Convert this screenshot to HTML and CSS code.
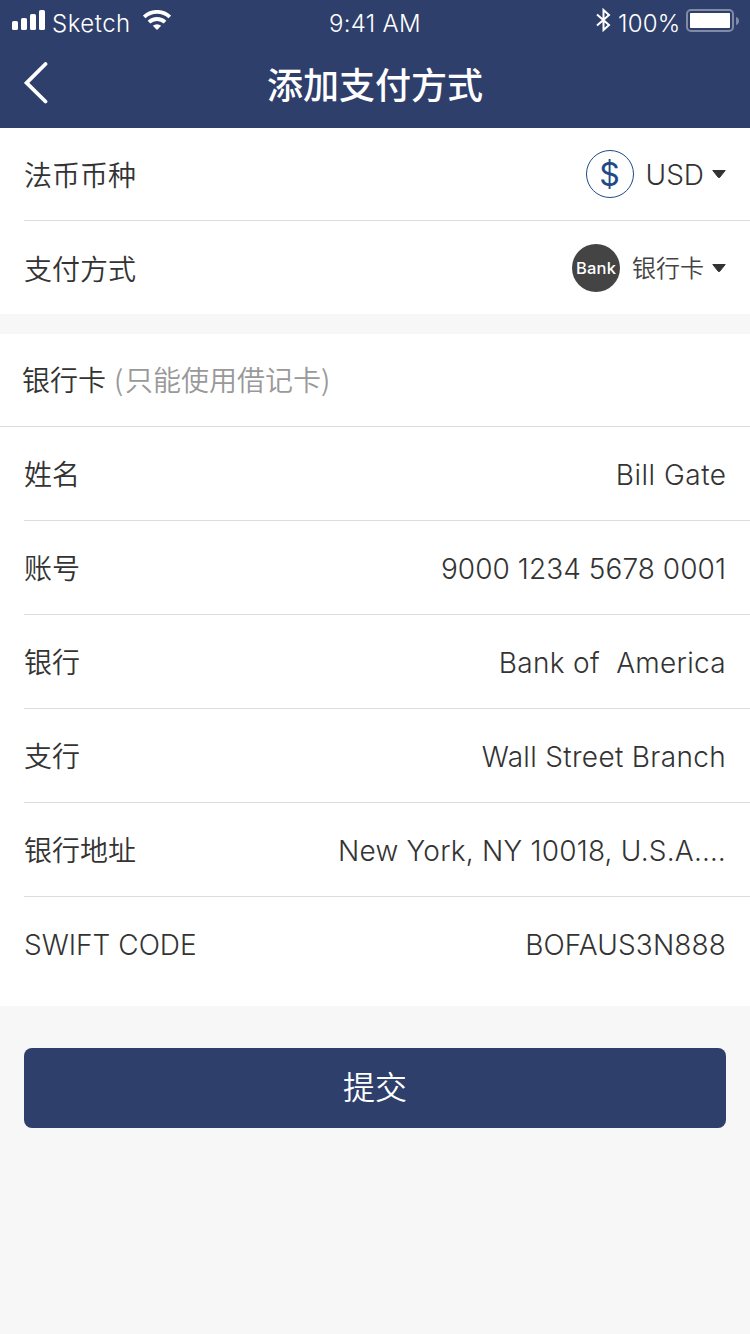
FILE: index.html
```html
<!DOCTYPE html>
<html lang="zh-CN">
<head>
<meta charset="utf-8">
<title>添加支付方式</title>
<link rel="stylesheet" href="styles.css">
</head>
<body>
<header class="header">
  <div class="status">
    <div class="status-left">
      <svg class="signal" width="34" height="20" viewBox="0 0 34 20" fill="#fff"><rect x="0" y="11" width="6" height="9" rx="1.6"/><rect x="9" y="8" width="6" height="12" rx="1.6"/><rect x="18" y="4" width="6" height="16" rx="1.6"/><rect x="27" y="0" width="6" height="20" rx="1.6"/></svg>
      <span class="carrier">Sketch</span>
      <svg class="wifi" width="28" height="20" viewBox="0 0 28 20" fill="none" stroke="#fff" stroke-width="3.8"><path d="M1.200 7a18.500 18.500 0 0 1 25.600 0M6 12.200a11.600 11.600 0 0 1 16 0"/><path d="M14 20l-4.200-4.200a6.200 6.200 0 0 1 8.400 0z" fill="#fff" stroke="none"/></svg>
    </div>
    <span class="clock">9:41 AM</span>
    <div class="status-right">
      <svg class="bluetooth" width="16" height="24" viewBox="0 0 16 24" fill="none" stroke="#fff" stroke-width="2"><path d="M1 6.500l12 10.500-5.500 5V2l5.500 5-12 10.500"/></svg>
      <span class="percent">100%</span>
      <svg class="battery" width="54" height="24" viewBox="0 0 54 24"><rect x="1" y="1" width="46" height="21" rx="4" fill="none" stroke="#fff" stroke-opacity=".4" stroke-width="2"/><rect x="4" y="4" width="40" height="15" rx=".8" fill="#fff"/><path d="M50 8q3 .8 3 4t-3 4z" fill="#fff" fill-opacity=".4"/></svg>
    </div>
  </div>
  <div class="nav">
    <svg class="back" width="24" height="42" viewBox="0 0 24 42" fill="none" stroke="#fff" stroke-width="3.800" stroke-linecap="round"><path d="M21.500 2L2.600 20.800 21.500 39.500"/></svg>
    <h1 class="title">添加支付方式</h1>
  </div>
</header>
<main>
  <section class="group">
    <div class="row"><span class="label">法币币种</span><span class="choice"><span class="coin">$</span><span class="usd">USD</span><svg class="caret" width="14" height="8" viewBox="0 0 14 8"><path d="M.8 .5h12.400L7.600 7.500H6.400z" fill="#333" stroke="#333" stroke-linejoin="round"/></svg></span></div>
    <div class="row"><span class="label">支付方式</span><span class="choice"><span class="bank">Bank</span><span class="method">银行卡</span><svg class="caret" width="14" height="8" viewBox="0 0 14 8"><path d="M.8 .5h12.400L7.600 7.500H6.400z" fill="#333" stroke="#333" stroke-linejoin="round"/></svg></span></div>
  </section>
  <section class="group details">
    <h2 class="heading">银行卡<span class="hint"><span class="paren">(</span>只能使用借记卡<span class="paren">)</span></span></h2>
    <div class="row"><span class="label">姓名</span><span class="value v-name">Bill Gate</span></div>
    <div class="row"><span class="label">账号</span><span class="value v-number">9000 1234 5678 0001</span></div>
    <div class="row"><span class="label">银行</span><span class="value v-bank">Bank of&nbsp; America</span></div>
    <div class="row"><span class="label">支行</span><span class="value v-branch">Wall Street Branch</span></div>
    <div class="row"><span class="label">银行地址</span><span class="value v-address">New York, NY 10018, U.S.A.…</span></div>
    <div class="row"><span class="value v-code">SWIFT CODE</span><span class="value v-swift">BOFAUS3N888</span></div>
  </section>
  <button class="submit">提交</button>
</main>
</body>
</html>
```

FILE: styles.css
```css
* { box-sizing: border-box; }
body { margin: 0; min-height: 1334px; background: #f7f7f7; color: #333; font-family: Inter, "Noto Sans CJK SC", sans-serif; }
svg { display: block; flex: none; }
.header { height: 128px; background: #2f3f6b; color: #fff; }
.status { height: 40px; padding: 0 12px; display: grid; grid-template-columns: 1fr auto 1fr; font-size: 24px; font-weight: 350; line-height: 48px; }
.status-left, .status-right { display: flex; align-items: flex-start; }
.status-right { justify-content: flex-end; }
.signal { margin-top: 10px; }
.carrier { width: 78px; margin-left: 6px; letter-spacing: .5px; line-height: 47px; }
.wifi { margin: 10px 0 0 13px; }
.clock { letter-spacing: .3px; }
.bluetooth { margin: 8px 6px 0 0; }
.percent { width: 62px; letter-spacing: .2px; line-height: 47px; }
.battery { margin: 9px -2px 0 6px; }
.nav { height: 88px; padding: 0 24px; display: grid; grid-template-columns: 24px 1fr 24px; align-items: center; }
.back { margin-top: -2px; }
.title { margin: 0; padding-bottom: 2px; text-align: center; font: 500 36px/86px "Noto Sans CJK SC", sans-serif; }
.group { background: #fff; }
.row { height: 94px; margin-left: 24px; padding-right: 24px; display: flex; align-items: center; justify-content: space-between; border-bottom: 1px solid #ddd; }
.group:first-child .row { height: 93px; }
.row + .row:last-child { border: 0; }
.group:first-child .row:last-child { padding-top: 1px; }
.label { padding-bottom: 1px; font: 350 28px/40px "Noto Sans CJK SC", sans-serif; white-space: nowrap; }
.choice { display: flex; align-items: center; }
.coin, .bank { width: 48px; height: 48px; border-radius: 50%; display: flex; align-items: center; justify-content: center; margin-right: 12px; }
.coin { border: 1px solid #1f4a87; color: #1f4a87; font-size: 32px; font-weight: 400; }
.bank { background: #444; color: #fff; font-size: 16.5px; font-weight: 500; letter-spacing: .2px; }
.usd { padding-top: 1px; font-size: 28px; font-weight: 300; }
.method { padding-bottom: 2px; font: 350 24px/34px "Noto Sans CJK SC", sans-serif; color: #444; }
.caret { margin-left: 8px; }
.details { margin-top: 20px; padding-bottom: 15px; }
.heading { height: 93px; margin: 0; padding-left: 22px; font: 350 28px/90px "Noto Sans CJK SC", sans-serif; border-bottom: 1px solid #ddd; }
.hint { color: #999; margin-left: 8px; }
.paren { display: inline-block; width: 11px; }
.value { padding-top: 2px; font-size: 28px; font-weight: 300; white-space: nowrap; }
.v-name { letter-spacing: .5px; margin-right: -.5px; }
.v-number { letter-spacing: .06px; }
.v-bank { letter-spacing: .3px; }
.v-branch { letter-spacing: .32px; }
.v-address { letter-spacing: .22px; }
.v-swift { letter-spacing: .12px; }
.submit { display: block; width: 702px; height: 80px; margin: 42px 24px 0; padding: 0 0 6px; border: 0; border-radius: 8px; background: #2f3f6b; color: #fff; font: 350 32px/74px "Noto Sans CJK SC", sans-serif; }
```
